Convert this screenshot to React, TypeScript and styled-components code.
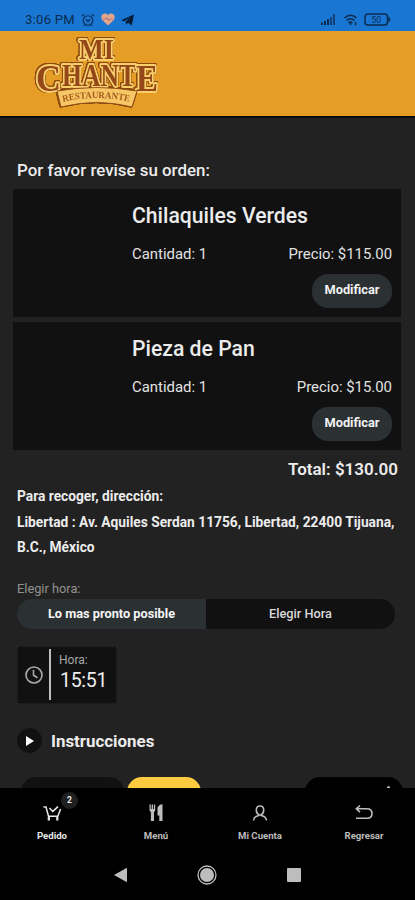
import React from "react";
import styled, { createGlobalStyle } from "styled-components";

const GlobalStyle = createGlobalStyle`
  *, *::before, *::after { box-sizing: border-box; }
  body { margin: 0; background: #222; font-family: Roboto, "Liberation Sans", sans-serif; }
  button { font-family: inherit; border: 0; padding: 0; }
  svg { display: block; }
`;

const Screen = styled.div`
  display: flex;
  flex-direction: column;
  width: 415px;
  height: 900px;
  overflow: hidden;
  background: #222;
  color: #ececec;
`;

const StatusBar = styled.div`
  display: flex;
  justify-content: space-between;
  align-items: flex-end;
  flex: none;
  height: 31px;
  padding: 0 24px 4px 25px;
  background: #1976d2;
  color: #0b2b50;
`;

const StatusGroup = styled.div<{ $gap: number }>`
  display: flex;
  align-items: center;
  gap: ${(p) => p.$gap}px;
  height: 15px;
`;

const Clock = styled.span`
  width: 50px;
  font-size: 13px;
  line-height: 15px;
  letter-spacing: 0.3px;
  white-space: nowrap;
`;

const Header = styled.header`
  flex: none;
  height: 87px;
  padding: 3px 0 0 31px;
  background: #e59d25;
  border-bottom: 2px solid #0c0c0e;
`;

const LogoArt = styled.svg`
  filter: drop-shadow(0.8px 0 0 #8c4a12) drop-shadow(-0.8px 0 0 #8c4a12)
    drop-shadow(0 0.8px 0 #8c4a12) drop-shadow(0 -0.4px 0 #8c4a12);
`;

const Content = styled.main`
  flex: none;
  height: 670px;
  padding: 40px 14px 0 13px;
  overflow: hidden;
`;

const Heading = styled.h1`
  margin: 0 0 0 4px;
  height: 31px;
  font-size: 16.9px;
  font-weight: 500;
  line-height: 25px;
`;

const OrderList = styled.div`
  display: flex;
  flex-direction: column;
  gap: 5px;
`;

const OrderCard = styled.article`
  height: 128px;
  padding: 13px 9px 0 119px;
  background: #111;
`;

const ItemName = styled.h2`
  margin: 0;
  font-size: 21.2px;
  font-weight: 500;
  line-height: 28px;
`;

const ItemRow = styled.div`
  display: flex;
  justify-content: space-between;
  margin-top: 14px;
  font-size: 14.9px;
  line-height: 20px;
  color: #e2e2e2;
`;

const EditButton = styled.button`
  display: block;
  width: 80px;
  height: 34px;
  margin: 10px 0 0 auto;
  padding-bottom: 2px;
  border-radius: 16px;
  background: #2b3033;
  color: #f2f2f2;
  font-size: 12.8px;
  font-weight: 700;
  line-height: 32px;
`;

const Total = styled.div`
  margin: 8px 3px 0 0;
  text-align: right;
  font-size: 17px;
  font-weight: 600;
  line-height: 22px;
`;

const Address = styled.div`
  margin: 4px 0 0 4px;
  font-size: 13.75px;
  font-weight: 700;
  line-height: 25.5px;
  white-space: nowrap;
`;

const FieldLabel = styled.div`
  margin: 19px 0 0 4px;
  font-size: 12.8px;
  line-height: 17px;
  color: #929292;
`;

const Segmented = styled.div`
  display: grid;
  grid-template-columns: 189px 189px;
  width: 378px;
  height: 30px;
  margin: 2px 0 0 4px;
  border-radius: 15px;
  overflow: hidden;
`;

const Segment = styled.button<{ $active?: boolean }>`
  background: ${(p) => (p.$active ? "#2b3033" : "#111")};
  color: ${(p) => (p.$active ? "#f5f5f5" : "#d8d8d8")};
  font-size: 12.75px;
  font-weight: ${(p) => (p.$active ? 700 : 500)};
  line-height: 28px;
`;

const TimeBox = styled.div`
  display: flex;
  align-items: center;
  width: 100px;
  height: 58px;
  margin: 17px 0 0 4px;
  padding: 0 0 0 7px;
  background: #111;
  border: 1px dotted #292929;
`;

const TimeText = styled.div`
  display: flex;
  flex-direction: column;
  height: 51px;
  margin-left: 6px;
  padding: 3px 0 0 8px;
  border-left: 2px solid #bebebe;
`;

const TimeCaption = styled.span`
  font-size: 12px;
  line-height: 17px;
  color: #a5a5a5;
`;

const TimeValue = styled.span`
  padding-left: 1px;
  font-size: 19.5px;
  line-height: 23px;
  letter-spacing: -0.3px;
  color: #eee;
`;

const Disclosure = styled.div`
  display: flex;
  align-items: center;
  gap: 9px;
  height: 26px;
  margin: 24px 0 0 4px;
  font-size: 16.9px;
  font-weight: 700;
  line-height: 26px;
`;

const DisclosureIcon = styled.span`
  display: grid;
  place-items: center;
  width: 25px;
  height: 25px;
  border-radius: 50%;
  background: #111;
`;

const Actions = styled.div`
  display: flex;
  margin: 23px 0 0 8px;
`;

const ActionPill = styled.div<{ $width: number; $color: string; $push?: boolean }>`
  display: flex;
  flex: none;
  justify-content: flex-end;
  width: ${(p) => p.$width}px;
  height: 34px;
  margin-left: ${(p) => (p.$push ? "101px" : "0")};
  margin-right: ${(p) => (p.$push ? "0" : "3px")};
  padding: 9px 13px;
  border-radius: 15px;
  background: ${(p) => p.$color};
`;

const Dot = styled.span`
  width: 3px;
  height: 3px;
  border-radius: 50%;
  background: #bbb;
`;

const TabBar = styled.nav`
  display: grid;
  grid-template-columns: repeat(4, 104px);
  flex: none;
  height: 65px;
  background: #000;
`;

const Tab = styled.div<{ $active?: boolean }>`
  position: relative;
  display: flex;
  flex-direction: column;
  align-items: center;
  padding-top: 15px;
  gap: 6px;
  font-size: 9.6px;
  line-height: 14px;
  font-weight: 700;
  color: ${(p) => (p.$active ? "#e8e8e8" : "#bcbcbc")};
`;

const Badge = styled.span`
  position: absolute;
  left: 61px;
  top: 4px;
  width: 17px;
  height: 17px;
  border-radius: 50%;
  background: #1f1f1f;
  color: #eee;
  font-size: 8.5px;
  line-height: 17px;
  text-align: center;
`;

const SystemBar = styled.div`
  display: flex;
  justify-content: center;
  align-items: center;
  gap: 70px;
  flex: none;
  height: 47px;
  padding: 0 1px 3px 0;
  background: #000;
`;

const Logo = () => (
  <LogoArt width="132" height="80" viewBox="0 0 132 80">
    <g
      fontFamily="Liberation Serif, serif"
      fontWeight="700"
      fill="#94481a"
      stroke="#f9cf6c"
      strokeWidth="4"
      strokeLinejoin="round"
      paintOrder="stroke"
    >
      <text x="48" y="25" fontSize="29" textLength="35" lengthAdjust="spacingAndGlyphs">MI</text>
      <text x="5" y="57" fontSize="38" textLength="25" lengthAdjust="spacingAndGlyphs">C</text>
      <text x="31" y="52" fontSize="32" textLength="74" lengthAdjust="spacingAndGlyphs">HANT</text>
      <text x="105" y="57" fontSize="38" textLength="22" lengthAdjust="spacingAndGlyphs">E</text>
    </g>
    <path d="M26 57 Q66 50 106 57 L101 73 Q66 64 30 73 Z" fill="#f7c766" stroke="#8c4a12" strokeWidth="0.9" />
    <path id="ribbon" d="M32 68 Q66 60 100 68" fill="none" />
    <text fontFamily="Liberation Serif, serif" fontSize="9.5" fontWeight="700" fill="#a45a1c">
      <textPath href="#ribbon" textLength="67" lengthAdjust="spacingAndGlyphs">RESTAURANTE</textPath>
    </text>
  </LogoArt>
);

const AlarmIcon = () => (
  <svg width="14" height="14" viewBox="0 0 14 14" fill="none" stroke="currentColor" strokeWidth="1.1">
    <circle cx="7" cy="7.5" r="4.8" />
    <path d="M1 3.2 3.3 1.2M13 3.2 10.7 1.2M2.8 12.8l1-1.2M11.2 12.8l-1-1.2M5 6.5l2 2 2-2" />
  </svg>
);

const HeartIcon = () => (
  <svg width="14" height="13" viewBox="0 0 14 13">
    <path d="M7 12.5 1.2 7C-1 4 1 .6 4 .6 5.4.6 6.4 1.3 7 2.2 7.6 1.3 8.6.6 10 .6c3 0 5 3.4 2.8 6.4Z" fill="#e5a48c" />
    <path d="M2 6h3l1-1.5L7.5 8l1-2H12" fill="none" stroke="#a87880" strokeWidth="1" />
  </svg>
);

const PlaneIcon = () => (
  <svg width="13" height="12" viewBox="0 0 13 12">
    <path d="M0 6.2 13 .4 10.8 11.6 7 8.8 5 10.8 4.7 7.4 10 3 3.3 7.2Z" fill="#061b35" />
  </svg>
);

const SignalIcon = () => (
  <svg width="14" height="11" viewBox="0 0 14 11" fill="currentColor">
    <path d="M0 8.5h2V11H0zM3 7h2v4H3zM6 5h2v6H6z" />
    <path d="M9 3h2v8H9zM12 0h2v11h-2z" opacity=".7" />
  </svg>
);

const WifiIcon = () => (
  <svg width="15" height="12" viewBox="-1.5 0 15 12" fill="none" stroke="currentColor" strokeWidth="1.6">
    <path d="M1 4Q7 -1.5 13 4M3 6.5Q7 3 11 6.5M5 9Q7 7.2 9 9" />
    <path d="M7 8.5v2.5M12 8v3.5" strokeWidth="1.3" />
  </svg>
);

const BatteryIcon = () => (
  <svg width="27" height="13" viewBox="0 0 27 13">
    <rect x="1" y="1" width="22.5" height="11" rx="3" fill="none" stroke="currentColor" strokeWidth="1.5" />
    <path d="M24.4 3.5Q28.5 6.5 24.4 9.5Z" fill="currentColor" />
    <text x="12.2" y="9.7" textAnchor="middle" fontSize="8.5" fontFamily="Roboto, sans-serif" fill="currentColor">50</text>
  </svg>
);

const ClockIcon = () => (
  <svg width="18" height="18" viewBox="0 0 18 18" fill="none" stroke="#aaa" strokeWidth="1.6">
    <circle cx="9" cy="9" r="8" />
    <path d="M8.5 4v5.2l4 2.5" />
  </svg>
);

const CartIcon = () => (
  <svg width="20" height="20" viewBox="0 0 20 20" fill="none" stroke="currentColor" strokeWidth="1.5">
    <path d="M1.5 4H4l2.5 9.3h9.3L18.6 6M7.5 5l3.3 3.4L16 3.6" />
    <path d="M6.8 14v3.6M15.3 14v3.6" strokeWidth="2.2" />
  </svg>
);

const CutleryIcon = () => (
  <svg width="20" height="20" viewBox="0 0 20 20" fill="currentColor">
    <path d="M3.5 1.5h1.3V6h.9V1.5h1.3V6h.9V1.5h1.3V7Q9.2 8.5 8 9V18H4.9V9Q3.5 8.5 3.5 7ZM11.5 4.5Q13 1.5 16.5 1.3V18h-3.2v-5.5h-1.8Z" />
  </svg>
);

const PersonIcon = () => (
  <svg width="20" height="20" viewBox="0 0 20 20" fill="none" stroke="currentColor" strokeWidth="1.6">
    <path d="M10 3C7.5 3 6.3 4.8 6.3 7s1.2 4.1 2.4 4.5v1Q3.8 13.6 3.5 17.5M10 3c2.5 0 3.7 1.8 3.7 4s-1.2 4.1-2.4 4.5v1q4.9 1.1 5.2 5M8.7 12h2.6" />
  </svg>
);

const ReturnIcon = () => (
  <svg width="20" height="20" viewBox="0 0 20 20" fill="none" stroke="currentColor" strokeWidth="1.6">
    <path d="M6 2.5 2.3 5.8 6 9.1M2.5 5.8H13Q18 5.8 18 10.5T13 15.3H2" />
  </svg>
);

const orders = [
  { name: "Chilaquiles Verdes", price: "$115.00" },
  { name: "Pieza de Pan", price: "$15.00" },
];

const tabs = [
  { label: "Pedido", Icon: CartIcon, count: 2 },
  { label: "Menú", Icon: CutleryIcon },
  { label: "Mi Cuenta", Icon: PersonIcon },
  { label: "Regresar", Icon: ReturnIcon },
];

export default function App() {
  return (
    <>
      <GlobalStyle />
      <Screen>
        <StatusBar>
          <StatusGroup $gap={6}>
            <Clock>3:06 PM</Clock>
            <AlarmIcon />
            <HeartIcon />
            <PlaneIcon />
          </StatusGroup>
          <StatusGroup $gap={7}>
            <SignalIcon />
            <WifiIcon />
            <BatteryIcon />
          </StatusGroup>
        </StatusBar>
        <Header>
          <Logo />
        </Header>
        <Content>
          <Heading>Por favor revise su orden:</Heading>
          <OrderList>
            {orders.map((o) => (
              <OrderCard key={o.name}>
                <ItemName>{o.name}</ItemName>
                <ItemRow>
                  <span>Cantidad: 1</span>
                  <span>Precio: {o.price}</span>
                </ItemRow>
                <EditButton>Modificar</EditButton>
              </OrderCard>
            ))}
          </OrderList>
          <Total>Total: $130.00</Total>
          <Address>
            Para recoger, dirección:
            <br />
            Libertad : Av. Aquiles Serdan 11756, Libertad, 22400 Tijuana,
            <br />
            B.C., México
          </Address>
          <FieldLabel>Elegir hora:</FieldLabel>
          <Segmented>
            <Segment $active>Lo mas pronto posible</Segment>
            <Segment>Elegir Hora</Segment>
          </Segmented>
          <TimeBox>
            <ClockIcon />
            <TimeText>
              <TimeCaption>Hora:</TimeCaption>
              <TimeValue>15:51</TimeValue>
            </TimeText>
          </TimeBox>
          <Disclosure>
            <DisclosureIcon>
              <svg width="8" height="10" viewBox="0 0 8 10">
                <path d="M0 0 8 5 0 10Z" fill="#fff" />
              </svg>
            </DisclosureIcon>
            Instrucciones
          </Disclosure>
          <Actions>
            <ActionPill $width={103} $color="#111" />
            <ActionPill $width={74} $color="#fccb40" />
            <ActionPill $width={98} $color="#000" $push>
              <Dot />
            </ActionPill>
          </Actions>
        </Content>
        <TabBar>
          {tabs.map(({ label, Icon, count }) => (
            <Tab key={label} $active={!!count}>
              <Icon />
              <span>{label}</span>
              {count && <Badge>{count}</Badge>}
            </Tab>
          ))}
        </TabBar>
        <SystemBar>
          <svg width="13" height="16" viewBox="0 0 13 16">
            <path d="M0 8 13 .8V15.2Z" fill="#bdbdbd" />
          </svg>
          <svg width="20" height="20" viewBox="0 0 20 20">
            <circle cx="10" cy="10" r="9" fill="none" stroke="#bdbdbd" strokeWidth="1.3" />
            <circle cx="10" cy="10" r="7" fill="#bdbdbd" />
          </svg>
          <svg width="14" height="14" viewBox="0 0 14 14">
            <rect width="14" height="14" rx="1" fill="#bdbdbd" />
          </svg>
        </SystemBar>
      </Screen>
    </>
  );
}
